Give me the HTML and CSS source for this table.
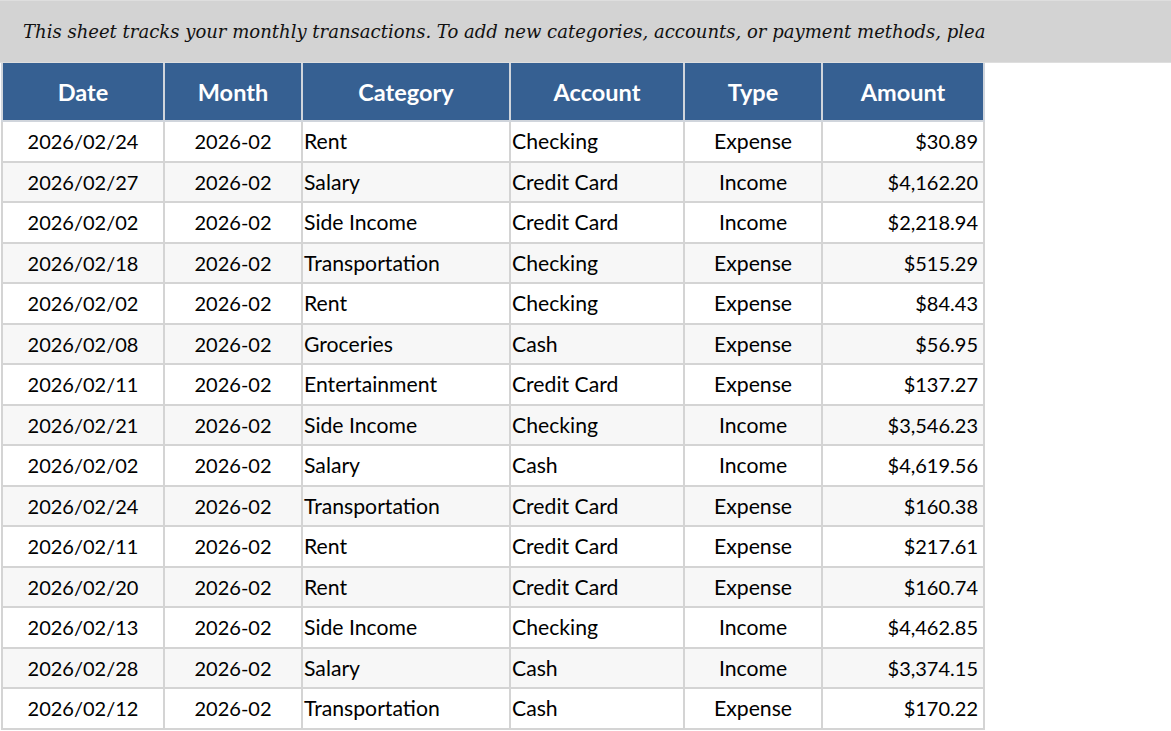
FILE: index.html
```html
<!DOCTYPE html>
<html>
<head>
<meta charset="utf-8">
<link rel="stylesheet" href="styles.css">
</head>
<body>
<div class="banner"><div class="note">This sheet tracks your monthly transactions. To add new categories, accounts, or payment methods, plea</div></div>
<table class="sheet">
<colgroup><col class="c1"><col class="c2"><col class="c3"><col class="c4"><col class="c5"><col class="c6"></colgroup>
<thead><tr><th>Date</th><th>Month</th><th>Category</th><th>Account</th><th>Type</th><th>Amount</th></tr></thead>
<tbody>
<tr><td class="ctr">2026/02/24</td><td class="ctr">2026-02</td><td class="txt">Rent</td><td class="txt">Checking</td><td class="ctr txt">Expense</td><td class="num">$30.89</td></tr>
<tr><td class="ctr">2026/02/27</td><td class="ctr">2026-02</td><td class="txt">Salary</td><td class="txt">Credit Card</td><td class="ctr txt">Income</td><td class="num">$4,162.20</td></tr>
<tr><td class="ctr">2026/02/02</td><td class="ctr">2026-02</td><td class="txt">Side Income</td><td class="txt">Credit Card</td><td class="ctr txt">Income</td><td class="num">$2,218.94</td></tr>
<tr><td class="ctr">2026/02/18</td><td class="ctr">2026-02</td><td class="txt">Transportation</td><td class="txt">Checking</td><td class="ctr txt">Expense</td><td class="num">$515.29</td></tr>
<tr><td class="ctr">2026/02/02</td><td class="ctr">2026-02</td><td class="txt">Rent</td><td class="txt">Checking</td><td class="ctr txt">Expense</td><td class="num">$84.43</td></tr>
<tr><td class="ctr">2026/02/08</td><td class="ctr">2026-02</td><td class="txt">Groceries</td><td class="txt">Cash</td><td class="ctr txt">Expense</td><td class="num">$56.95</td></tr>
<tr><td class="ctr">2026/02/11</td><td class="ctr">2026-02</td><td class="txt">Entertainment</td><td class="txt">Credit Card</td><td class="ctr txt">Expense</td><td class="num">$137.27</td></tr>
<tr><td class="ctr">2026/02/21</td><td class="ctr">2026-02</td><td class="txt">Side Income</td><td class="txt">Checking</td><td class="ctr txt">Income</td><td class="num">$3,546.23</td></tr>
<tr><td class="ctr">2026/02/02</td><td class="ctr">2026-02</td><td class="txt">Salary</td><td class="txt">Cash</td><td class="ctr txt">Income</td><td class="num">$4,619.56</td></tr>
<tr><td class="ctr">2026/02/24</td><td class="ctr">2026-02</td><td class="txt">Transportation</td><td class="txt">Credit Card</td><td class="ctr txt">Expense</td><td class="num">$160.38</td></tr>
<tr><td class="ctr">2026/02/11</td><td class="ctr">2026-02</td><td class="txt">Rent</td><td class="txt">Credit Card</td><td class="ctr txt">Expense</td><td class="num">$217.61</td></tr>
<tr><td class="ctr">2026/02/20</td><td class="ctr">2026-02</td><td class="txt">Rent</td><td class="txt">Credit Card</td><td class="ctr txt">Expense</td><td class="num">$160.74</td></tr>
<tr><td class="ctr">2026/02/13</td><td class="ctr">2026-02</td><td class="txt">Side Income</td><td class="txt">Checking</td><td class="ctr txt">Income</td><td class="num">$4,462.85</td></tr>
<tr><td class="ctr">2026/02/28</td><td class="ctr">2026-02</td><td class="txt">Salary</td><td class="txt">Cash</td><td class="ctr txt">Income</td><td class="num">$3,374.15</td></tr>
<tr><td class="ctr">2026/02/12</td><td class="ctr">2026-02</td><td class="txt">Transportation</td><td class="txt">Cash</td><td class="ctr txt">Expense</td><td class="num">$170.22</td></tr>
</tbody>
</table>
</body>
</html>
```
FILE: styles.css
```css
html, body {
  margin: 0;
  padding: 0;
  background: #ffffff;
}
body {
  font-family: "Lato", "Carlito", "Liberation Sans", sans-serif;
  color: #000;
}
.banner {
  height: 61px;
  background: #d3d3d3;
  border-top: 1px solid #dedede;
  border-bottom: 1px solid #dedede;
  display: flex;
  align-items: center;
}
.note {
  white-space: nowrap;
  padding-left: 23px;
  font-family: "DejaVu Serif", "Liberation Serif", serif;
  font-style: italic;
  font-size: 18.05px;
  color: #111;
  margin-top: -1px;
}
.sheet {
  border-collapse: collapse;
  table-layout: fixed;
  margin-left: 1px;
  width: 983px;
}
.c1 { width: 162px; }
.c2 { width: 138px; }
.c3 { width: 208px; }
.c4 { width: 174px; }
.c5 { width: 138px; }
.c6 { width: 162px; }
.sheet th {
  background: #366092;
  color: #fff;
  font-weight: 700;
  font-size: 23.5px;
  height: 57px;
  padding: 0;
  border: 2px solid #d0d5dc;
  border-top: none;
}
.sheet td {
  height: 38.5px;
  padding: 0 5px 0 1px;
  font-size: 20px;
  border: 2px solid #d4d4d4;
  white-space: nowrap;
  overflow: hidden;
}
.sheet td.txt {
  font-size: 21.2px;
}
.sheet tbody tr:nth-child(even) td {
  background: #f7f7f7;
}
.ctr { text-align: center; }
.sheet td.ctr { padding: 0; }
.num { text-align: right; }
```
